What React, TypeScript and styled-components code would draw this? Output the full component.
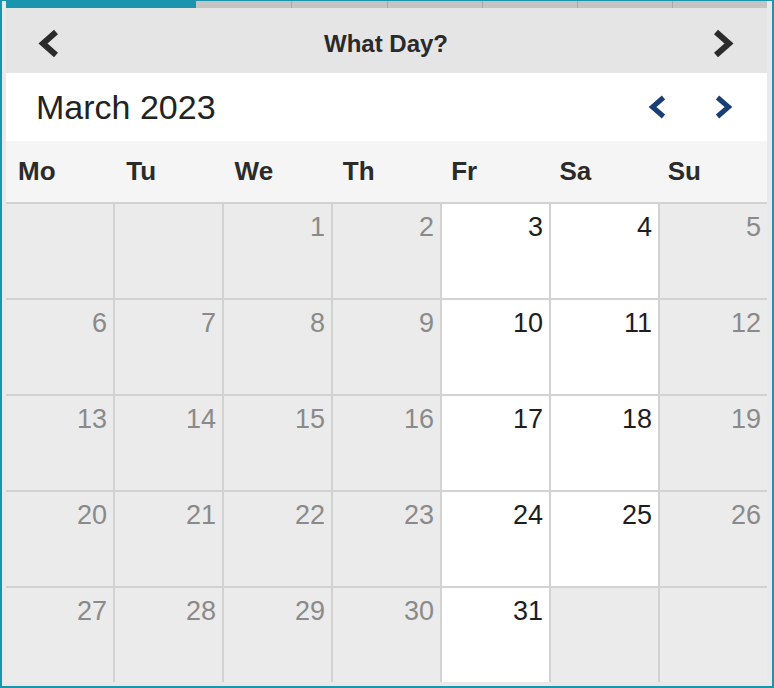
import { FC } from 'react';
import styled, { createGlobalStyle } from 'styled-components';

const GlobalStyle = createGlobalStyle`
    html, body {
        margin: 0;
        padding: 0;
        background: #ffffff;
        font-family: "Liberation Sans", Arial, Helvetica, sans-serif;
    }
    * { box-sizing: border-box; }
`;

const Frame = styled.div`
    width: 774px;
    height: 688px;
    border: 2px solid #1996ae;
    border-top-width: 1px;
    background: #e9e9e9;
    padding: 0 5px 4px 4px;
    display: flex;
    flex-direction: column;
    overflow: hidden;
`;

const Progress = styled.div`
    display: grid;
    grid-template-columns: repeat(8, 1fr);
    height: 7px;
    flex: none;
`;

const Step = styled.div<{ $done?: boolean; $first?: boolean }>`
    background: ${p => (p.$done ? '#1996ae' : '#c4c4c4')};
    border-left: ${p => (p.$first || p.$done ? 'none' : '1px solid #a9a9a9')};
`;

const Header = styled.div`
    height: 65px;
    flex: none;
    background: #e5e5e5;
    display: flex;
    align-items: center;
    justify-content: space-between;
    padding: 6px 33px 0 32px;
`;

const Title = styled.h1`
    margin: 0;
    font-size: 24px;
    font-weight: bold;
    color: #2a2a2a;
`;

const IconButton = styled.button`
    border: none;
    background: none;
    padding: 0;
    margin: 0;
    display: flex;
    cursor: pointer;
`;

const MonthRow = styled.div`
    height: 68px;
    flex: none;
    background: #ffffff;
    display: flex;
    align-items: center;
    justify-content: space-between;
    padding: 0 34px 0 30px;
`;

const MonthLabel = styled.div`
    font-size: 34px;
    color: #222222;
`;

const MonthNav = styled.div`
    display: flex;
    gap: 47px;
`;

const WeekRow = styled.div`
    height: 61px;
    flex: none;
    background: #f5f5f5;
    display: grid;
    grid-template-columns: repeat(7, 1fr);
    column-gap: 1px;
    align-items: center;
    padding-right: 4px;
`;

const WeekDay = styled.div`
    padding-left: 12px;
    font-size: 26px;
    font-weight: bold;
    color: #2b2b2b;
`;

const Grid = styled.div`
    flex: 1;
    display: grid;
    grid-template-columns: repeat(7, 1fr);
    grid-template-rows: repeat(5, 1fr);
    gap: 2px;
    border-top: 2px solid #d2d2d2;
    background: #d2d2d2;
`;

const Cell = styled.div<{ $open?: boolean }>`
    background: ${p => (p.$open ? '#ffffff' : '#ebebeb')};
    color: ${p => (p.$open ? '#1e1e1e' : '#8a8a8a')};
    font-size: 27px;
    line-height: 27px;
    text-align: right;
    padding: 10px 6px 0 0;
`;

const Chevron: FC<{ dir: 'left' | 'right'; color: string; w: number; h: number; stroke: number }> = ({ dir, color, w, h, stroke }) => {
    const pad = stroke / 2 + 1;
    const pts = dir === 'left'
        ? `${w - pad},${pad} ${pad + 1},${h / 2} ${w - pad},${h - pad}`
        : `${pad},${pad} ${w - pad - 1},${h / 2} ${pad},${h - pad}`;
    return (
        <svg width={w} height={h} viewBox={`0 0 ${w} ${h}`}>
            <polyline points={pts} fill="none" stroke={color} strokeWidth={stroke} strokeLinejoin="miter" strokeLinecap="butt" />
        </svg>
    );
};

const weekDays = ['Mo', 'Tu', 'We', 'Th', 'Fr', 'Sa', 'Su'];
const open = [3, 4, 10, 11, 17, 18, 24, 25, 31];

// march 2023 starts on a wednesday
const days: (number | null)[] = [null, null, ...Array.from({ length: 31 }, (_, i) => i + 1), null, null];

export default function App() {
    return (
        <>
            <GlobalStyle />
            <Frame>
                <Progress>
                    {Array.from({ length: 8 }, (_, i) => (
                        <Step key={i} $done={i < 2} $first={i === 2} />
                    ))}
                </Progress>
                <Header>
                    <IconButton aria-label="Back">
                        <Chevron dir="left" color="#2b2b2b" w={22} h={31} stroke={6} />
                    </IconButton>
                    <Title>What Day?</Title>
                    <IconButton aria-label="Next">
                        <Chevron dir="right" color="#2b2b2b" w={22} h={31} stroke={6} />
                    </IconButton>
                </Header>
                <MonthRow>
                    <MonthLabel>March 2023</MonthLabel>
                    <MonthNav>
                        <IconButton aria-label="Previous month">
                            <Chevron dir="left" color="#173f75" w={19} h={26} stroke={5} />
                        </IconButton>
                        <IconButton aria-label="Next month">
                            <Chevron dir="right" color="#173f75" w={19} h={26} stroke={5} />
                        </IconButton>
                    </MonthNav>
                </MonthRow>
                <WeekRow>
                    {weekDays.map(d => (
                        <WeekDay key={d}>{d}</WeekDay>
                    ))}
                </WeekRow>
                <Grid>
                    {days.map((d, i) => (
                        <Cell key={i} $open={d !== null && open.includes(d)}>
                            {d}
                        </Cell>
                    ))}
                </Grid>
            </Frame>
        </>
    );
}
